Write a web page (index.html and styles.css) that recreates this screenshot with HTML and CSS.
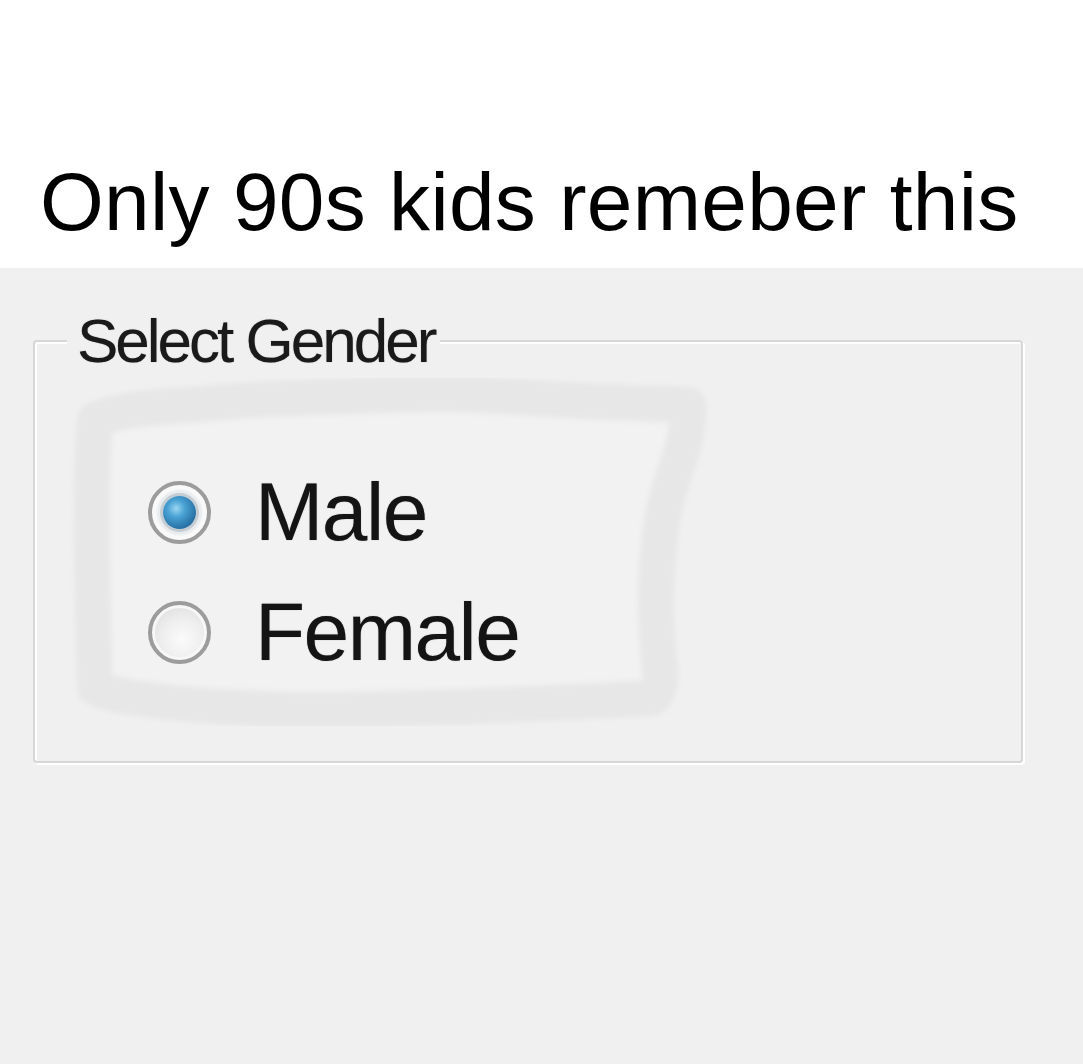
FILE: index.html
```html
<!DOCTYPE html>
<html lang="en">
<head>
<meta charset="utf-8">
<title>Only 90s kids remeber this</title>
<link rel="stylesheet" href="styles.css">
</head>
<body>
<header class="caption">
  <h1 class="caption-text">Only 90s kids remeber this</h1>
</header>
<main class="stage">
  <svg class="smudge" width="1083" height="796" viewBox="0 0 1083 796" aria-hidden="true">
    <defs>
      <filter id="soft" x="-5%" y="-5%" width="110%" height="110%">
        <feGaussianBlur stdDeviation="2.5"/>
      </filter>
    </defs>
    <path filter="url(#soft)" fill="#f2f2f2" stroke="#e7e7e7" stroke-width="36" stroke-linejoin="round" stroke-linecap="round"
      d="M95 152 C110 146 130 141 150 140 C200 136 250 131 300 130 C350 128 400 126 450 126 C500 127 550 132 600 134 C640 135 670 136 688 137 C690 150 686 165 682 182 C675 205 666 228 662 252 C658 280 656 305 656 332 C656 360 658 385 660 402 C661 418 658 426 652 430 C600 433 550 435 500 437 C430 440 360 442 300 442 C240 441 190 437 150 432 C120 428 105 425 95 420 C94 390 93 360 93 332 C92 300 92 265 92 232 C92 205 93 175 95 152 Z"/>
  </svg>
  <fieldset class="group">
    <legend class="group-title">Select Gender</legend>
    <div class="options">
      <label class="option">
        <span class="radio radio-on"><span class="dot"></span></span>
        <span class="option-label">Male</span>
      </label>
      <label class="option">
        <span class="radio radio-off"></span>
        <span class="option-label">Female</span>
      </label>
    </div>
  </fieldset>
</main>
</body>
</html>
```

FILE: styles.css
```css
* { box-sizing: border-box; }

html, body {
  margin: 0;
  padding: 0;
}

body {
  background: #f0f0f0;
  min-height: 100vh;
  font-family: "Liberation Sans", Arial, sans-serif;
}

.caption {
  background: #ffffff;
  height: 268px;
  padding-top: 161px;
}

.caption-text {
  margin: 0;
  padding-left: 40px;
  font-weight: normal;
  font-size: 82px;
  line-height: 82px;
  letter-spacing: 0.3px;
  color: #000;
  white-space: nowrap;
}

.stage {
  position: relative;
  padding-top: 42px;
  height: 796px;
}

.smudge {
  position: absolute;
  left: 0;
  top: 0;
  pointer-events: none;
}

.group {
  position: relative;
  margin: 0 60px 0 33px;
  padding: 99px 0 88px 32px;
  border: 2px solid #d7d7d7;
  border-radius: 4px;
  box-shadow: inset 2px 2px 0 #ffffff, 2px 2px 0 #ffffff;
  min-width: 0;
}

.group-title {
  padding: 0 6px 0 10px;
  background: #f0f0f0;
  font-size: 62px;
  line-height: 62px;
  letter-spacing: -3px;
  color: #1a1a1a;
  text-shadow: 0 0 1px rgba(0, 0, 0, 0.45);
}

.options {
  display: flex;
  flex-direction: column;
  gap: 38px;
  padding-left: 81px;
}

.option {
  display: flex;
  align-items: center;
  gap: 44px;
  height: 82px;
}

.option-label {
  font-size: 82px;
  line-height: 82px;
  letter-spacing: -1.5px;
  color: #141414;
  text-shadow: 0 0 1px rgba(0, 0, 0, 0.45);
}

.radio {
  flex: none;
  width: 63px;
  height: 63px;
  border-radius: 50%;
  border: 4px solid #9c9c9c;
  display: flex;
  align-items: center;
  justify-content: center;
}

.radio-on {
  background: radial-gradient(circle, #e9ecef 0 55%, #fafafa 62%, #f4f4f4 100%);
}

.dot {
  width: 33px;
  height: 33px;
  border-radius: 50%;
  background: radial-gradient(circle at 40% 38%, #9ad6f2 0, #4aa2d4 30%, #2c78ad 65%, #1d4e78 100%);
  box-shadow: 0 0 0 3px #c5cdd4;
}

.radio-off {
  background: radial-gradient(circle at 55% 62%, #fbfbfb 0, #eeeeee 45%, #d6d6d6 100%);
  box-shadow: inset 0 0 0 3px #f7f7f7;
}
```
